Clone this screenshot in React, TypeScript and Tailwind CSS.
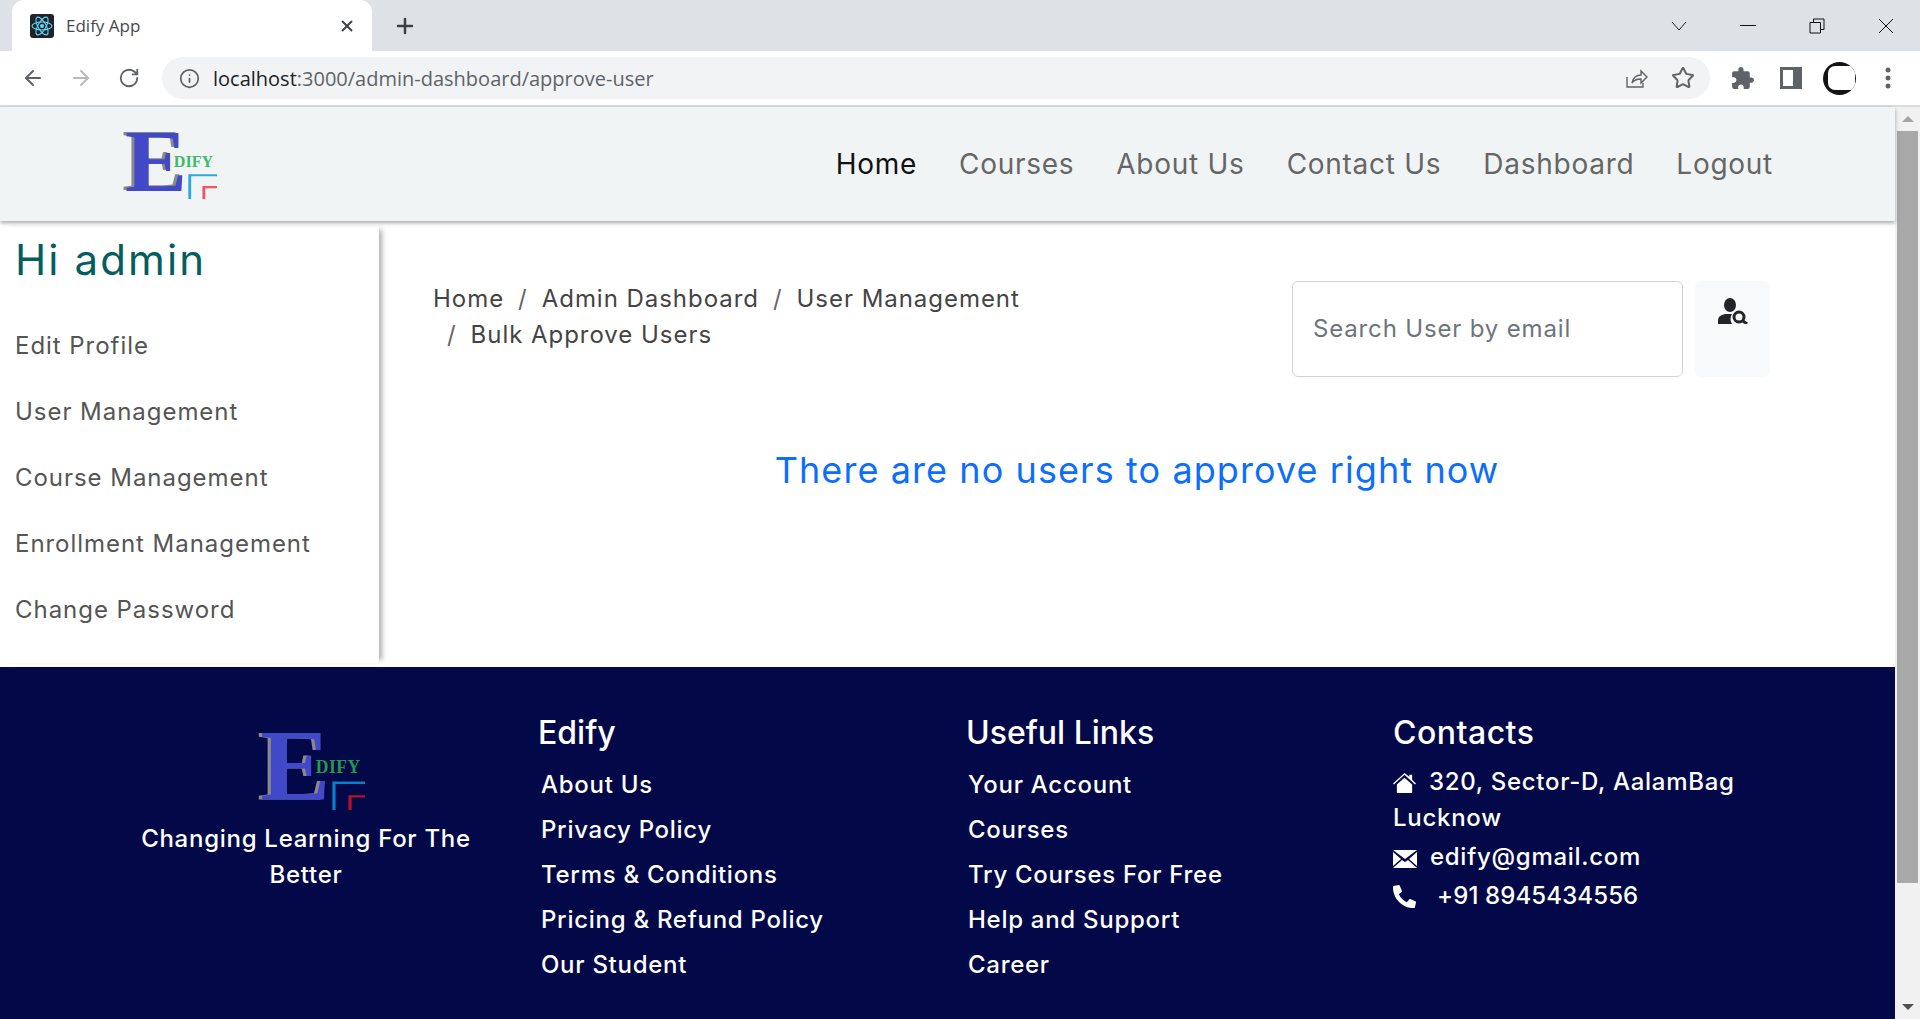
import { ArrowLeft, ArrowRight, Info, Plus, RotateCw, Star, X } from "lucide-react";
import { FaPhoneAlt } from "react-icons/fa";

const navLinks = ["Courses", "About Us", "Contact Us", "Dashboard", "Logout"];
const sideLinks = ["Edit Profile", "User Management", "Course Management", "Enrollment Management", "Change Password"];
const edifyLinks = ["About Us", "Privacy Policy", "Terms & Conditions", "Pricing & Refund Policy", "Our Student"];
const usefulLinks = ["Your Account", "Courses", "Try Courses For Free", "Help and Support", "Career"];

const Logo = ({ className, green, blue, red }: { className: string; green: string; blue: string; red: string }) => (
  <svg viewBox="0 0 100 100" preserveAspectRatio="none" className={className}>
    <text x="-1" y="87" fontFamily="Liberation Serif" fontWeight="700" fontSize="126" textLength="66" lengthAdjust="spacingAndGlyphs" fill="#8a8a8a">E</text>
    <text x="2" y="88" fontFamily="Liberation Serif" fontWeight="700" fontSize="128" textLength="66" lengthAdjust="spacingAndGlyphs" fill="#4149c9">E</text>
    <text x="54" y="54" fontFamily="Liberation Serif" fontWeight="700" fontSize="24" textLength="42" lengthAdjust="spacingAndGlyphs" fill={green}>DIFY</text>
    <path d="M71 100V66H100" fill="none" stroke={blue} strokeWidth="3" />
    <path d="M86 100V83H100" fill="none" stroke={red} strokeWidth="3" />
  </svg>
);

const BrowserChrome = () => (
  <div className="shrink-0 font-['Open_Sans',sans-serif]">
    <div className="flex h-[51px] bg-[#dee1e6]">
      <div className="ml-[12px] flex w-[360px] items-center rounded-t-[12px] bg-white pl-[18px] pr-[16px]">
        <svg viewBox="0 0 24 24" className="h-[24px] w-[24px] rounded-[3px] bg-[#20232a]">
          <g fill="none" stroke="#61dafb" strokeWidth="1.1">
            <ellipse cx="12" cy="12" rx="10" ry="4" />
            <ellipse cx="12" cy="12" rx="10" ry="4" transform="rotate(60 12 12)" />
            <ellipse cx="12" cy="12" rx="10" ry="4" transform="rotate(120 12 12)" />
          </g>
          <circle cx="12" cy="12" r="2" fill="#61dafb" />
        </svg>
        <span className="ml-[12px] flex-1 text-[17px] text-[#45494e]">Edify App</span>
        <X size={18} strokeWidth={2.5} className="text-[#3c4043]" />
      </div>
      <div className="ml-[21px] flex items-center">
        <Plus size={24} strokeWidth={2.5} className="text-[#3c4043]" />
      </div>
      <div className="ml-auto flex items-center pr-[26px]">
        <svg viewBox="0 0 16 10" className="mr-[53px] h-[10px] w-[16px]"><path d="M1 1l7 8 7-8" fill="none" stroke="#222" /></svg>
        <div className="mr-[53px] h-px w-[16px] bg-[#111]" />
        <svg viewBox="0 0 16 16" className="mr-[53px] h-[16px] w-[16px]"><path d="M1 4.5h10.5V15H1zM4.5 4V1H15v10.5h-3" fill="none" stroke="#111" /></svg>
        <svg viewBox="0 0 16 16" className="h-[16px] w-[16px]"><path d="M1 1l14 14M15 1L1 15" stroke="#111" /></svg>
      </div>
    </div>
    <div className="flex h-[54px] items-center bg-white">
      <ArrowLeft size={24} strokeWidth={2} className="ml-[21px] text-[#5f6368]" />
      <ArrowRight size={24} strokeWidth={2} className="ml-[24px] text-[#b7b9bc]" />
      <RotateCw size={22} strokeWidth={2} className="ml-[25px] text-[#5f6368]" />
      <div className="ml-[22px] flex h-[42px] w-[1548px] items-center rounded-full bg-[#f1f3f4] pl-[17px] pr-[15px]">
        <Info size={21} strokeWidth={2} className="text-[#5f6368]" />
        <span className="ml-[13px] flex-1 pt-[2px] text-[20px] text-[#5f6368]"><span className="text-[#202124]">localhost</span>:3000/admin-dashboard/approve-user</span>
        <svg viewBox="0 0 24 24" className="mr-[1px] h-[24px] w-[24px]"><path d="M3 11v10h16v-4M8 17c1-5 4-8 9-8V5l6 6-6 6v-4c-4 0-7 1-9 4z" fill="none" stroke="#5f6368" strokeWidth="1.4" /></svg>
        <Star size={24} strokeWidth={2} className="ml-[22px] text-[#5f6368]" />
      </div>
      <svg viewBox="0 0 24 24" className="ml-[20px] h-[25px] w-[25px]">
        <path
          d="M20.5 11H19V7c0-1.1-.9-2-2-2h-4V3.5C13 2.12 11.88 1 10.5 1S8 2.12 8 3.5V5H4c-1.1 0-1.99.9-1.99 2v3.8H3.5c1.49 0 2.7 1.21 2.7 2.7s-1.21 2.7-2.7 2.7H2V20c0 1.1.9 2 2 2h3.8v-1.5c0-1.49 1.21-2.7 2.7-2.7 1.49 0 2.7 1.21 2.7 2.7V22H17c1.1 0 2-.9 2-2v-4h1.5c1.38 0 2.5-1.12 2.5-2.5S21.88 11 20.5 11z"
          fill="#5f6368"
        />
      </svg>
      <svg viewBox="0 0 22 22" className="ml-[25px] h-[22px] w-[22px]"><path d="M0 0h22v22H0z M3 3v16h10V3z" fill="#5f6368" fillRule="evenodd" /></svg>
      <div className="ml-[21px] flex h-[33px] w-[33px] items-center overflow-hidden rounded-full bg-[#141414]">
        <div className="ml-[5px] h-[24px] w-[27px] rounded-l-[7px] bg-white" />
      </div>
      <svg viewBox="0 0 6 22" className="ml-[29px] h-[22px] w-[6px]"><g fill="#5f6368"><circle cx="3" cy="3" r="2.5" /><circle cx="3" cy="11" r="2.5" /><circle cx="3" cy="19" r="2.5" /></g></svg>
    </div>
    <div className="h-[2px] bg-[#dadce0]" />
  </div>
);

const Navbar = () => (
  <nav className="relative z-20 flex h-[114px] shrink-0 items-center bg-[#f1f4f5] pl-[123px] pr-[122px] shadow-[0_2px_4px_rgba(0,0,0,0.35)]">
    <Logo className="h-[70px] w-[94px]" green="#3dba6c" blue="#2aa8e0" red="#f25560" />
    <ul className="ml-auto flex items-center gap-[42px] text-[28px] tracking-[0.026em] text-[#666]">
      <li className="text-[#111]">Home</li>
      {navLinks.map((link) => (
        <li key={link}>{link}</li>
      ))}
    </ul>
  </nav>
);

const Sidebar = () => (
  <aside className="relative z-10 mb-[4px] mt-[6px] w-[379px] shrink-0 bg-white pl-[15px] shadow-[6px_0_5px_-3px_rgba(0,0,0,0.32)]">
    <h2 className="mt-[8px] text-[42px] leading-[50px] tracking-[0.05em] text-[#055e5e]">Hi admin</h2>
    <ul className="mt-[28px] text-[24px] leading-[36px] tracking-[0.04em] text-[#555]">
      {sideLinks.map((link) => (
        <li key={link} className="py-[15px]">{link}</li>
      ))}
    </ul>
  </aside>
);

const crumbs = ["Admin Dashboard", "User Management", "Bulk Approve Users"];

const MainPanel = () => (
  <main className="flex-1 bg-white">
    <div className="flex items-start pl-[54px] pr-[125px] pt-[60px]">
      <ol className="flex w-[680px] flex-wrap text-[24px] leading-[36px] tracking-[0.04em] text-[#444]">
        <li>Home</li>
        {crumbs.map((crumb) => (
          <li key={crumb} className="flex">
            <span className="px-[14px] text-[#666]">/</span>
            {crumb}
          </li>
        ))}
      </ol>
      <div className="ml-auto flex gap-[12px]">
        <div className="flex h-[96px] w-[391px] items-center rounded-[6px] border border-[#ced4da] bg-white pl-[20px] text-[24px] tracking-[0.035em] text-[#6c757d]">
          Search User by email
        </div>
        <div className="flex h-[96px] w-[75px] justify-center rounded-[6px] bg-[#f8f9fa] pt-[17px]">
          <svg viewBox="0 0 30 26" className="h-[26px] w-[30px]">
            <ellipse cx="12" cy="7" rx="6" ry="7" fill="#212529" />
            <path d="M0 26v-3c0-5 4-7 9-7h5c-2 3-2 7 0 10z" fill="#212529" />
            <circle cx="21" cy="19" r="5" fill="none" stroke="#212529" strokeWidth="3" />
            <path d="M25 23l4 3" stroke="#212529" strokeWidth="3" />
          </svg>
        </div>
      </div>
    </div>
    <h3 className="mt-[68px] text-center text-[36px] leading-[50px] tracking-[0.03em] text-[#0d6efd]">
      There are no users to approve right now
    </h3>
  </main>
);

const FooterLinks = ({ title, links, indent }: { title: string; links: string[]; indent: string }) => (
  <div>
    <h4 className="text-[32px] font-medium leading-[44px] tracking-normal">{title}</h4>
    <ul className={`mt-[12px] ${indent}`}>
      {links.map((link) => (
        <li key={link} className="mb-[9px] leading-[36px]">{link}</li>
      ))}
    </ul>
  </div>
);

const Footer = () => (
  <footer className="grid h-[352px] shrink-0 grid-cols-[464px_428px_427px_1fr] bg-[#030849] pl-[74px] pt-[44px] text-[24px] font-medium tracking-[0.03em] text-white">
    <div className="flex flex-col items-center pt-[19px]">
      <Logo className="ml-[10px] h-[80px] w-[107px]" green="#23994c" blue="#0a7fc4" red="#b3142b" />
      <p className="mt-[11px] w-[340px] text-center leading-[36px]">Changing Learning For The Better</p>
    </div>
    <FooterLinks title="Edify" links={edifyLinks} indent="pl-[3px]" />
    <FooterLinks title="Useful Links" links={usefulLinks} indent="pl-[2px]" />
    <div className="w-[370px]">
      <h4 className="text-[32px] font-medium leading-[44px] tracking-[0.015em]">Contacts</h4>
      <p className="mt-[9px] leading-[36px]">
        <svg viewBox="0 0 24 22" className="mr-[13px] inline h-[21px] w-[23px] align-[-3px]">
          <path d="M12 1L0 12l1 1L12 3l11 10 1-1-4-4V3h-3v2zM4 13l8-7 8 7v9H4z" fill="#fff" />
        </svg>
        320, Sector-D, AalamBag
        <br />
        Lucknow
      </p>
      <p className="mt-[3px] leading-[36px]">
        <svg viewBox="0 0 24 18" className="mr-[13px] inline h-[18px] w-[24px] align-[-3px]">
          <path d="M0 0h24L12 9zM0 2v14l8-7zM24 2v14l-8-7zM0 18l9-8 3 2 3-2 9 8z" fill="#fff" />
        </svg>
        edify@gmail.com
      </p>
      <p className="mt-[3px] flex items-center leading-[36px] tracking-[0.005em]">
        <FaPhoneAlt className="mr-[21px] h-[23px] w-[23px]" />
        +91 8945434556
      </p>
    </div>
  </footer>
);

const Scrollbar = () => (
  <div className="flex w-[25px] shrink-0 flex-col items-center bg-[#f1f1f1]">
    <div className="mt-[9px] h-0 w-0 border-x-[6px] border-b-[6px] border-x-transparent border-b-[#a3a3a3]" />
    <div className="mt-[9px] h-[752px] w-[21px] bg-[#a8a8a8]" />
    <div className="mb-[9px] mt-auto h-0 w-0 border-x-[6px] border-t-[6px] border-x-transparent border-t-[#505050]" />
  </div>
);

export default function App() {
  return (
    <div className="flex h-[1019px] flex-col overflow-hidden bg-white font-['Inter',sans-serif]">
      <BrowserChrome />
      <div className="flex min-h-0 flex-1">
        <div className="flex min-w-0 flex-1 flex-col">
          <Navbar />
          <div className="flex h-[446px] shrink-0">
            <Sidebar />
            <MainPanel />
          </div>
          <Footer />
        </div>
        <Scrollbar />
      </div>
    </div>
  );
}
